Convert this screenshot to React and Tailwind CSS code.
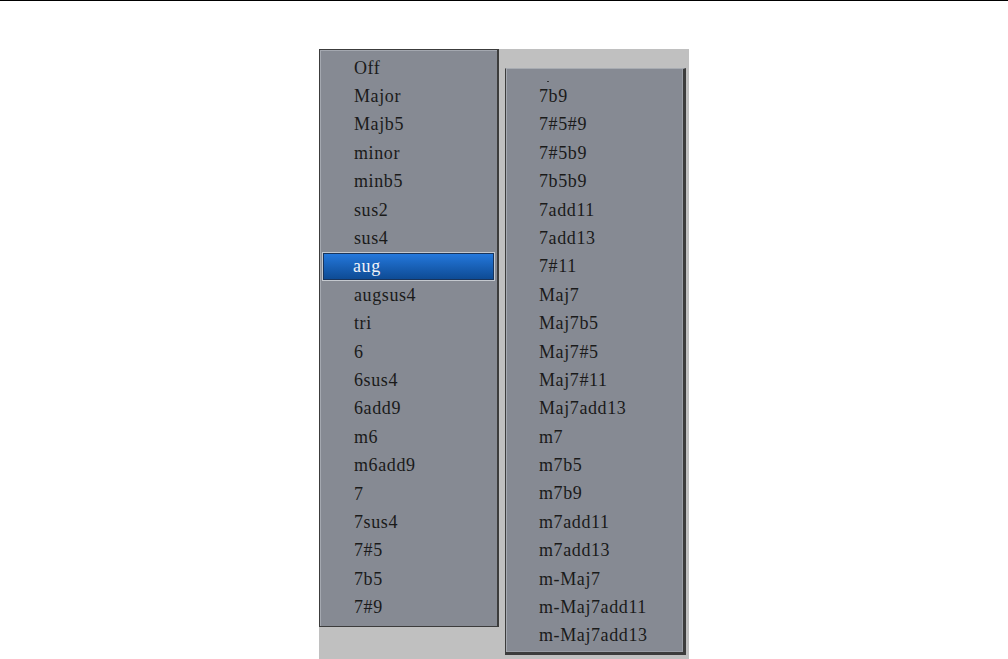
import React from "react";

const left = ["Off","Major","Majb5","minor","minb5","sus2","sus4","aug","augsus4","tri","6","6sus4","6add9","m6","m6add9","7","7sus4","7#5","7b5","7#9"];
const right = ["7b9","7#5#9","7#5b9","7b5b9","7add11","7add13","7#11","Maj7","Maj7b5","Maj7#5","Maj7#11","Maj7add13","m7","m7b5","m7b9","m7add11","m7add13","m-Maj7","m-Maj7add11","m-Maj7add13"];

function Item({ label, selected, pl }) {
  if (selected) {
    return (
      <div className="h-[28.4px] border border-[#c4c8ce]">
        <div className="h-full border border-[#18345c] bg-linear-to-b from-[#2478dc] to-[#0e4b94] text-[#f2f4f8] leading-[24.4px] pl-[29px]">
          {label}
        </div>
      </div>
    );
  }
  return <div className={`h-[28.4px] leading-[28.4px] ${pl}`}>{label}</div>;
}

export default function App() {
  return (
    <div className="w-[1008px] h-[659px] bg-white border-t border-black overflow-hidden">
      <div className="pt-[48px] pl-[319px]">
        <div className="w-[370px] h-[620px] bg-[#c0c0c0] flex items-start font-['Liberation_Serif',serif] text-[18px] tracking-[0.6px] text-[#1a1a1a]">
          <div className="w-[180px] h-[578px] bg-[#868a93] border border-[#3c3c3c] border-r-2 shadow-[inset_1px_1px_0_#a4a8b0] pt-[3.7px] px-[2px]">
            {left.map((l) => (
              <Item key={l} label={l} selected={l === "aug"} pl="pl-[32px]" />
            ))}
          </div>
          <div className="ml-[6px] mt-[19px] w-[181px] h-[587px] bg-[#868a93] border border-[#3c3c3c] border-r-[3px] border-b-[3px] border-t-[#a8acb2] shadow-[inset_1px_0_0_#a4a8b0,inset_-1px_-1px_0_#9a9ea6] pt-[13px]">
            <div className="h-0 relative">
              <div className="absolute left-[41px] -top-[1.5px] w-[1.5px] h-[1.5px] bg-[#333]" />
            </div>
            {right.map((l) => (
              <Item key={l} label={l} pl="pl-[33px]" />
            ))}
          </div>
        </div>
      </div>
    </div>
  );
}
